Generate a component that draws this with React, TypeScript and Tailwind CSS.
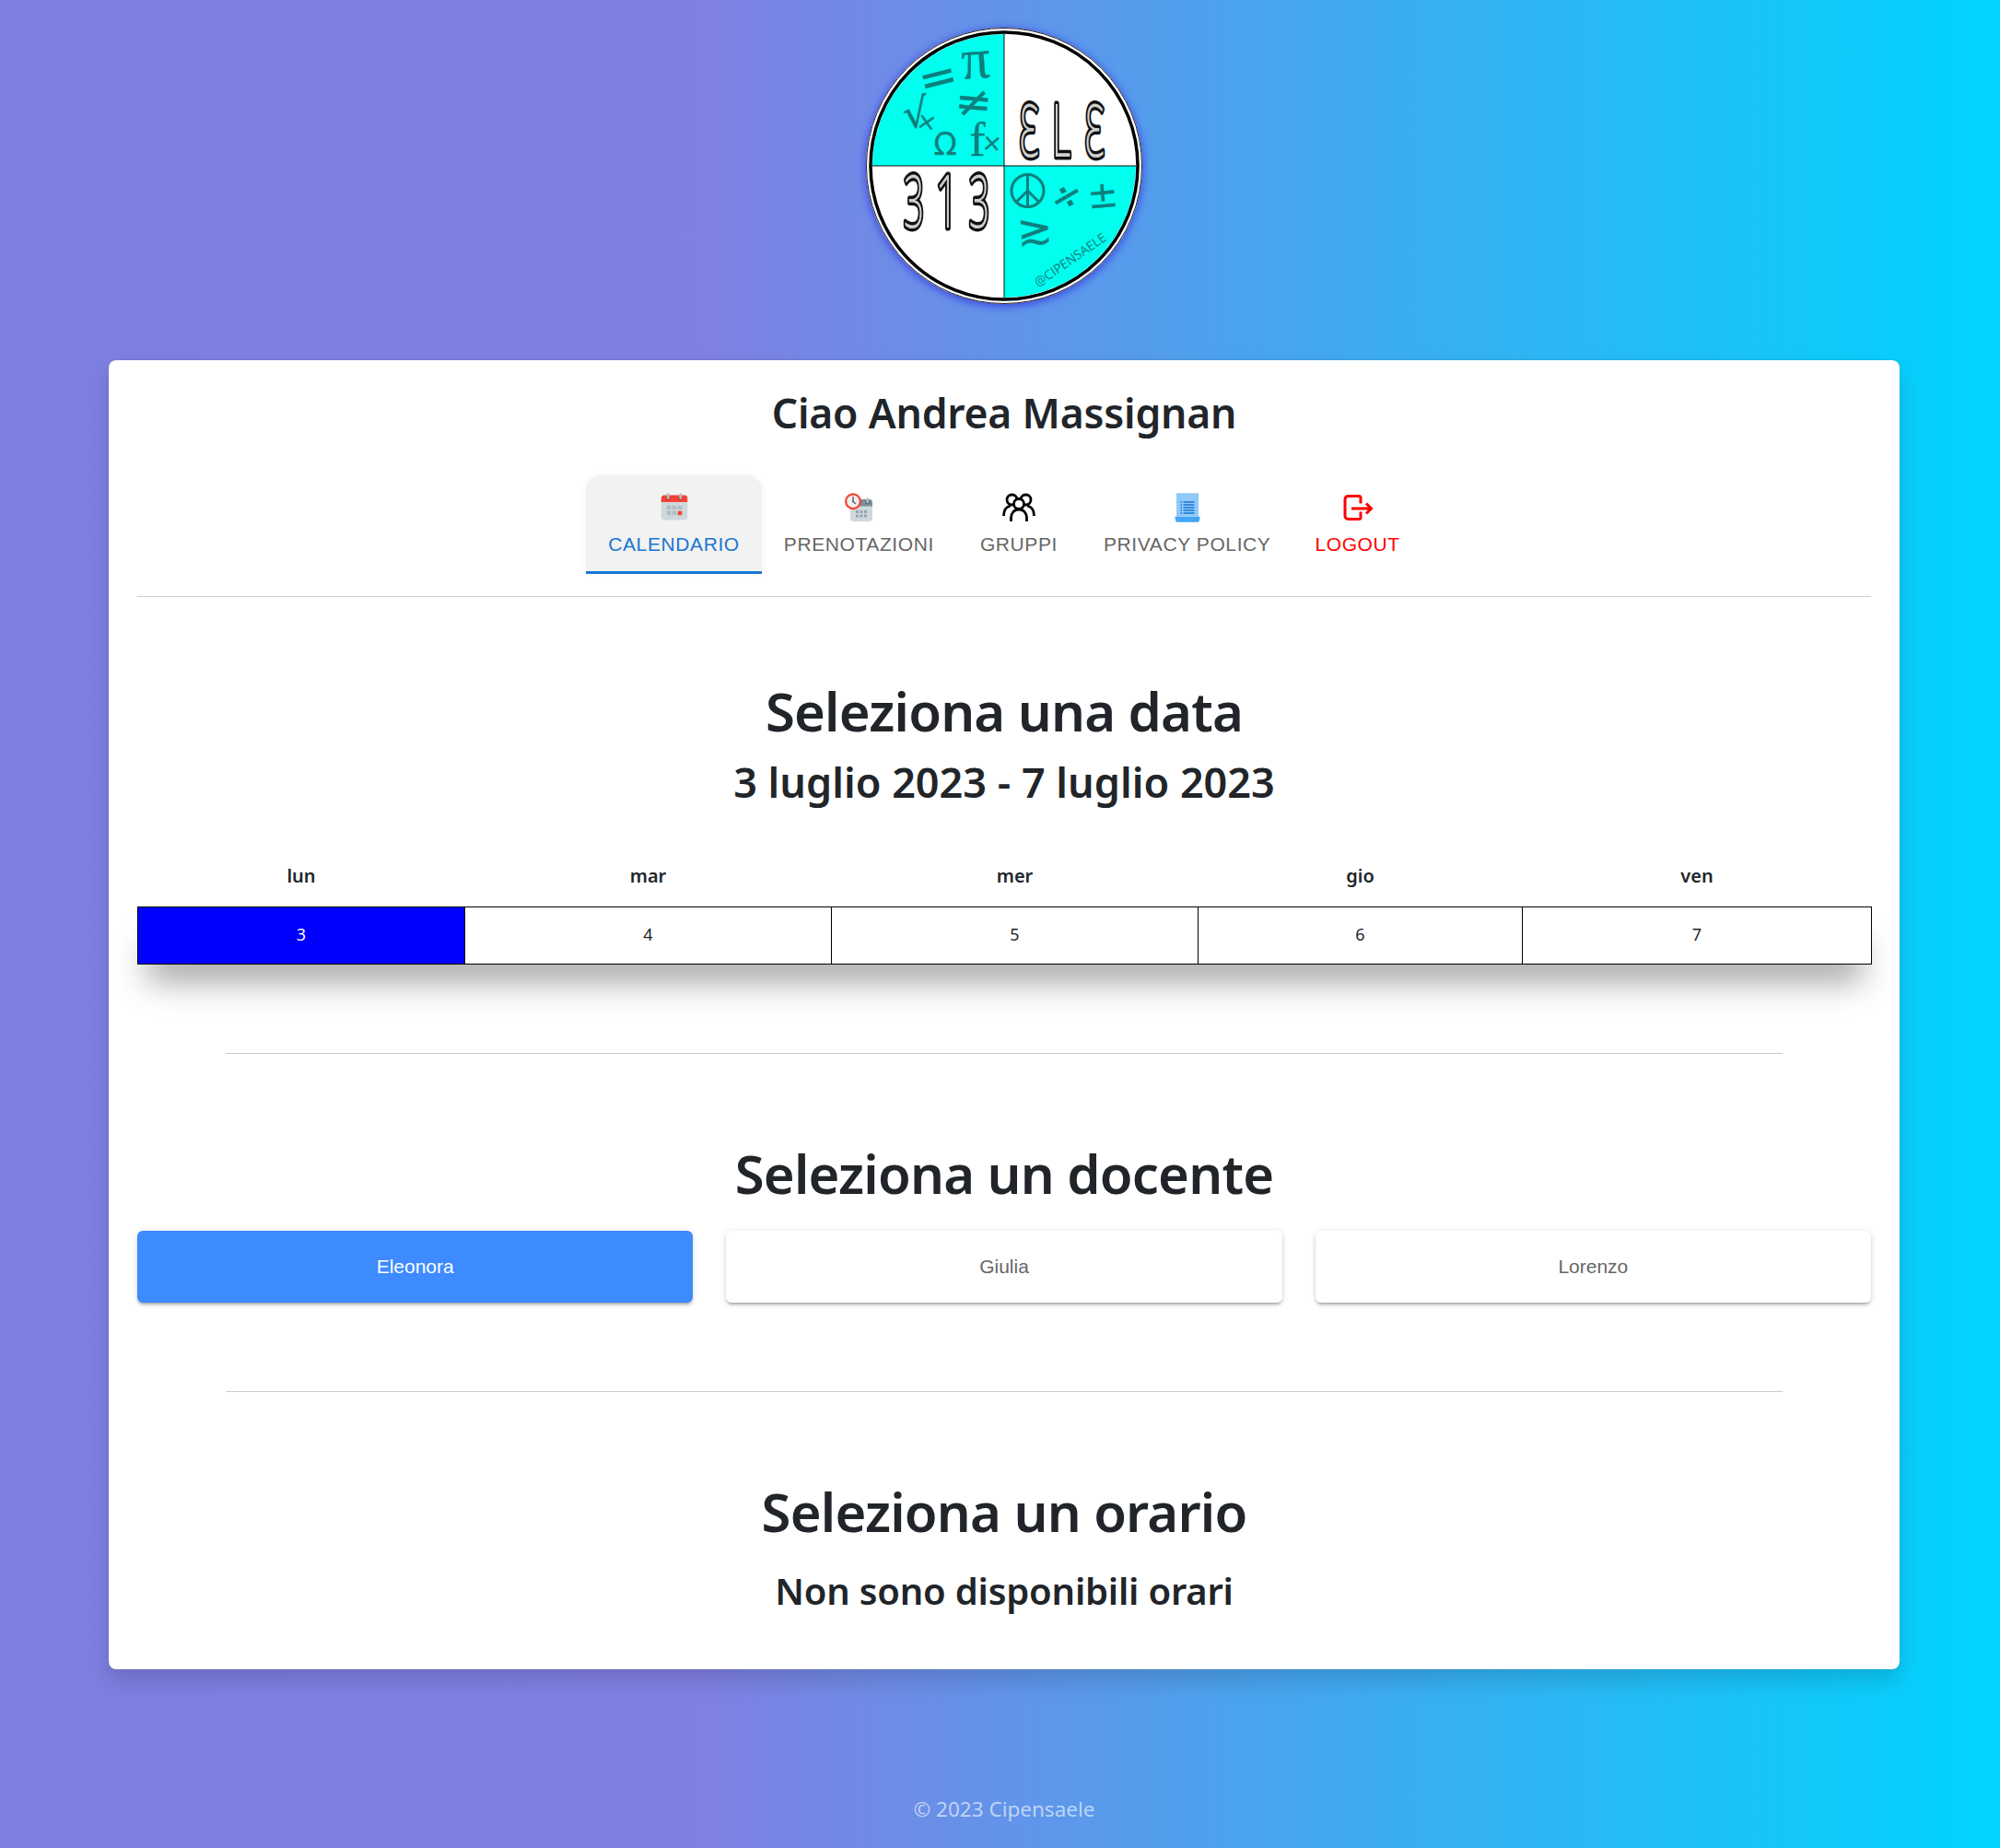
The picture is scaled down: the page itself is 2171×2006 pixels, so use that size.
import { FcPlanner, FcOvertime, FcRules } from "react-icons/fc";

const FIRA = "font-['Noto_Sans',sans-serif]";
const ARIAL = "font-['Liberation_Sans',sans-serif]";

const Tube = ({ x, y, ch, sx = 0.5, mirror = false }: { x: number; y: number; ch: string; sx?: number; mirror?: boolean }) => (
  <g
    transform={`translate(${x} ${y}) scale(${mirror ? -sx : sx} 1)`}
    textAnchor="middle"
    fontFamily="Open Sans, sans-serif"
    fontWeight={300}
    fontSize={79}
  >
    <text fill="#111" stroke="#111" strokeWidth={5.6} strokeLinejoin="round" style={{ vectorEffect: "non-scaling-stroke" }}>
      {ch}
    </text>
    <text fill="#cfcfcf" style={{ vectorEffect: "non-scaling-stroke" }}>
      {ch}
    </text>
  </g>
);

const Sym = ({ x, y, ch, size, rot = 0, font = "DejaVu Sans" }: { x: number; y: number; ch: string; size: number; rot?: number; font?: string }) => (
  <text
    transform={`translate(${x} ${y}) rotate(${rot})`}
    textAnchor="middle"
    dominantBaseline="central"
    fontFamily={`${font}, sans-serif`}
    fontSize={size}
    fill="#0e7f7d"
    stroke="#0e7f7d"
    strokeWidth="0.3"
  >
    {ch}
  </text>
);

const Logo = () => (
  <div className="mx-auto h-[300px] w-[300px] rounded-full shadow-[0_2px_8px_1px_rgba(50,50,225,0.75)]">
    <svg viewBox="20 20 300 300" className="h-full w-full">
      <defs>
        <clipPath id="inner">
          <circle cx="170" cy="170" r="143" />
        </clipPath>
      </defs>
      <circle cx="170" cy="170" r="150" fill="#fff" />
      <circle cx="170" cy="170" r="149.500" fill="none" stroke="#222" strokeWidth="1" />
      <g clipPath="url(#inner)">
        <rect x="20" y="20" width="150" height="150" fill="#00ffee" />
        <rect x="170" y="170" width="150" height="150" fill="#00ffee" />
        <rect x="169.500" y="20" width="1" height="300" fill="#111" />
        <rect x="20" y="169.500" width="300" height="1" fill="#111" />
      </g>
      <circle cx="170" cy="170" r="145" fill="none" stroke="#000" strokeWidth="3.500" />

      <Sym x={139} y={54} ch="π" size={62} rot={-4} font="Liberation Serif" />
      <Sym x={98} y={74} ch="=" size={50} rot={-14} />
      <Sym x={137} y={100} ch="≠" size={48} rot={5} />
      <Sym x={74} y={113} ch="√" size={44} rot={-8} />
      <Sym x={86} y={122} ch="×" size={26} rot={10} />
      <Sym x={106} y={146} ch="Ω" size={33} />
      <Sym x={141} y={141} ch="f" size={52} font="Liberation Serif" />
      <Sym x={157} y={145} ch="×" size={26} rot={5} />

      <Tube x={197} y={160} ch="3" mirror />
      <Tube x={232} y={160} ch="L" />
      <Tube x={268} y={160} ch="3" mirror />
      <Tube x={72} y={237} ch="3" />
      <Tube x={108} y={237} ch="1" sx={0.55} />
      <Tube x={143} y={237} ch="3" />

      <g stroke="#0e7f7d" strokeWidth="3" fill="none">
        <circle cx="195.500" cy="197" r="17.500" />
        <path d="M195.500 180v34M195.500 197l-12.500 12.500M195.500 197l12.500 12.500" />
      </g>
      <Sym x={237} y={202} ch="÷" size={44} rot={-30} />
      <Sym x={277} y={201} ch="±" size={40} rot={-5} />
      <Sym x={203} y={239} ch="≳" size={46} rot={-4} />
      <text
        transform="translate(207 302) rotate(-34.600)"
        fontFamily="Open Sans, sans-serif"
        fontSize="14"
        textLength="91"
        fill="#0e7f7d"
      >
        @CIPENSAELE
      </text>
    </svg>
  </div>
);

const GroupIcon = () => (
  <svg viewBox="0 0 36 36" className="h-9 w-9" fill="none" stroke="#000" strokeWidth="2.800">
    <circle cx="10.500" cy="9.500" r="5.500" />
    <circle cx="25.500" cy="9.500" r="5.500" />
    <path d="M1.500 27c0-6 3-10 7.500-11M34.500 27c0-6-3-10-7.500-11" />
    <circle cx="18" cy="14" r="5.500" fill="#fff" />
    <path d="M9.500 33v-4c0-5 3.500-9 8.500-9s8.500 4 8.500 9v4" fill="#fff" />
  </svg>
);

const LogoutIcon = () => (
  <svg viewBox="0 0 36 36" className="h-9 w-9" fill="none" stroke="#ff0000" strokeWidth="3">
    <path d="M21 13.500V7.500a2 2 0 0 0-2-2H7.500a3.500 3.500 0 0 0-3.500 3.500v18a3.500 3.500 0 0 0 3.500 3.500H19a2 2 0 0 0 2-2v-6" />
    <path d="M11 19h21M27 13.500 32.500 19 27 24.500" />
  </svg>
);

const tabs = [
  { label: "CALENDARIO", icon: <FcPlanner size={36} />, cls: "text-[#1976d2] bg-[#f2f2f2] border-[#1976d2] shadow-[0_0_8px_rgba(0,0,0,0.04)]" },
  { label: "PRENOTAZIONI", icon: <FcOvertime size={36} />, cls: "text-[#666666] border-transparent" },
  { label: "GRUPPI", icon: <GroupIcon />, cls: "text-[#666666] border-transparent" },
  { label: "PRIVACY POLICY", icon: <FcRules size={36} />, cls: "text-[#666666] border-transparent" },
  { label: "LOGOUT", icon: <LogoutIcon />, cls: "text-[#ff0000] border-transparent" },
];

const days = [
  { name: "lun", n: 3, w: "w-[355px]" },
  { name: "mar", n: 4, w: "w-[398px]" },
  { name: "mer", n: 5, w: "w-[398px]" },
  { name: "gio", n: 6, w: "w-[352px]" },
  { name: "ven", n: 7, w: "w-[379px]" },
];

const Divider = () => <div className="mx-auto mt-[96px] h-px w-[1690px] bg-[#cccccc]" />;

const Title = ({ children, mt }: { children: string; mt: string }) => (
  <h1 className={`${mt} text-center text-[58px] leading-[72px] font-semibold tracking-[-0.8px] text-[#212529]`}>{children}</h1>
);

export default function App() {
  return (
    <div className={`${FIRA} min-h-[2006px] bg-[linear-gradient(90deg,#7d7fe1_0%,#8080e3_35%,#00d4ff_100%)] pt-[30px] pl-[9px]`}>
      <Logo />
      <main className="mx-[109px] mt-[61px] rounded-[8px] bg-white px-[31px] pt-[28px] pb-[56px] shadow-[0_12px_24px_rgba(0,0,0,0.15),0_0_1px_rgba(0,0,0,0.4)]">
        <h3 className="text-center text-[44.500px] leading-[58px] font-semibold tracking-[-0.2px] text-[#212529]">Ciao Andrea Massignan</h3>

        <div className="mt-[39px] border-b border-[#cccccc] pb-[24px]">
          <div className={`${ARIAL} flex justify-center`}>
            {tabs.map((t) => (
              <div
                key={t.label}
                className={`flex h-[107px] min-w-[136px] flex-col items-center justify-center gap-[9px] rounded-t-[16px] border-b-[3px] px-6 text-[21px] leading-[26px] tracking-[0.6px] ${t.cls}`}
              >
                {t.icon}
                <span>{t.label}</span>
              </div>
            ))}
          </div>
        </div>

        <Title mt="mt-[88px]">Seleziona una data</Title>
        <h2 className="mt-[12px] text-center text-[45px] leading-[58px] font-semibold text-[#212529]">
          3 luglio 2023 - 7 luglio 2023
        </h2>

        <table className="mt-[50px] w-full table-fixed text-[#212529]">
          <thead>
            <tr>
              {days.map((d) => (
                <th key={d.name} className={`${d.w} h-[56px] pb-[9px] align-middle text-[20px] font-semibold`}>
                  {d.name}
                </th>
              ))}
            </tr>
          </thead>
          <tbody className="shadow-[0_30px_35px_-10px_rgba(0,0,0,0.35)]">
            <tr>
              {days.map((d, i) => (
                <td
                  key={d.name}
                  className={`h-[62px] border border-black pb-px text-center text-[18px] ${i === 0 ? "bg-[#0000ff] text-white" : "bg-white"}`}
                >
                  {d.n}
                </td>
              ))}
            </tr>
          </tbody>
        </table>

        <Divider />

        <Title mt="mt-[94px]">Seleziona un docente</Title>
        <div className={`${ARIAL} mt-[26px] grid grid-cols-3 gap-[36px] text-[21px]`}>
          {["Eleonora", "Giulia", "Lorenzo"].map((name, i) => (
            <button
              key={name}
              className={`h-[78px] rounded-[6px] shadow-[0_4px_2px_-3px_rgba(0,0,0,0.2),0_3px_3px_0_rgba(0,0,0,0.14),0_1px_7px_0_rgba(0,0,0,0.12)] ${
                i === 0 ? "bg-[#3d8bff] text-white" : "bg-white text-[#666666]"
              }`}
            >
              {name}
            </button>
          ))}
        </div>

        <Divider />

        <Title mt="mt-[94px]">Seleziona un orario</Title>
        <h3 className="mt-[21px] text-center text-[40px] leading-[58px] font-semibold tracking-[-0.2px] text-[#212529]">
          Non sono disponibili orari
        </h3>
      </main>
      <footer className="mt-[137px] pb-[28px] text-center text-[22.500px] leading-[30px] text-white/60">© 2023 Cipensaele</footer>
    </div>
  );
}
